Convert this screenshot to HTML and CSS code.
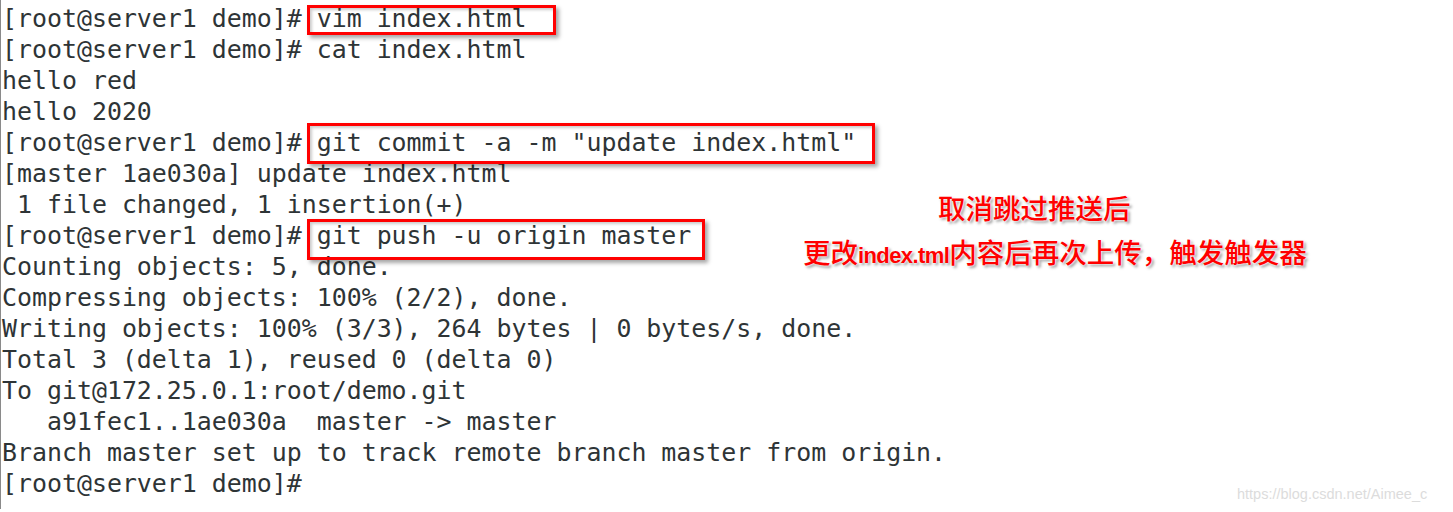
FILE: index.html
```html
<!DOCTYPE html>
<html lang="zh-CN">
<head>
<meta charset="utf-8">
<title>terminal</title>
<link rel="stylesheet" href="styles.css">
</head>
<body>
<div class="screen">
<pre class="term">[root@server1 demo]# vim index.html
[root@server1 demo]# cat index.html
hello red
hello 2020
[root@server1 demo]# git commit -a -m "update index.html"
[master 1ae030a] update index.html
 1 file changed, 1 insertion(+)
[root@server1 demo]# git push -u origin master
Counting objects: 5, done.
Compressing objects: 100% (2/2), done.
Writing objects: 100% (3/3), 264 bytes | 0 bytes/s, done.
Total 3 (delta 1), reused 0 (delta 0)
To git@172.25.0.1:root/demo.git
   a91fec1..1ae030a  master -&gt; master
Branch master set up to track remote branch master from origin.
[root@server1 demo]# </pre>
<div class="box box1"></div>
<div class="box box2"></div>
<div class="box box3"></div>
<div class="note note1">取消跳过推送后</div>
<div class="note note2"><span>更改</span><span class="lat">index.tml</span><span>内容后再次上传，触发触发器</span></div>
<div class="mark">https://blog.csdn.net/Aimee_c</div>
</div>
</body>
</html>
```

FILE: styles.css
```css
html, body {
  margin: 0;
  padding: 0;
  background: #ffffff;
}
.screen {
  position: relative;
  width: 1453px;
  height: 512px;
  overflow: hidden;
  background: #ffffff;
}
.term {
  margin: 0;
  padding: 3px 0 0 1px;
  border-left: 1px solid #8a8a8a;
  height: 509px;
  box-sizing: border-box;
  font-family: "DejaVu Sans Mono", monospace;
  font-size: 24.9px;
  line-height: 31px;
  color: #2e3436;
}
.box {
  position: absolute;
  border: 3px solid #ff0000;
  box-sizing: border-box;
  box-shadow: 3px 3px 4px rgba(0, 0, 0, 0.35), inset 2px 2px 3px rgba(0, 0, 0, 0.2);
}
.box1 { left: 307px; top: 5px; width: 249px; height: 30px; }
.box2 { left: 307px; top: 123px; width: 568px; height: 41px; }
.box3 { left: 307px; top: 219px; width: 398px; height: 41px; }
.note {
  position: absolute;
  font-family: "Noto Sans CJK SC", sans-serif;
  font-weight: 500;
  font-size: 27.5px;
  line-height: 36px;
  color: #ff0000;
  white-space: nowrap;
  text-shadow: 0 0 2px #fff, 0 0 3px #fff, 2px 2px 3px rgba(0, 0, 0, 0.45);
}
.note1 { left: 938px; top: 189px; }
.note2 {
  left: 803px;
  top: 233px;
  display: flex;
  align-items: baseline;
}
.lat {
  font-family: "Liberation Sans", sans-serif;
  font-weight: 700;
  font-size: 22px;
  letter-spacing: -0.6px;
}
.mark {
  position: absolute;
  left: 1237px;
  top: 485px;
  font-family: "Liberation Sans", sans-serif;
  font-size: 14.5px;
  line-height: 18px;
  color: #dcdcdc;
  white-space: nowrap;
}
```
